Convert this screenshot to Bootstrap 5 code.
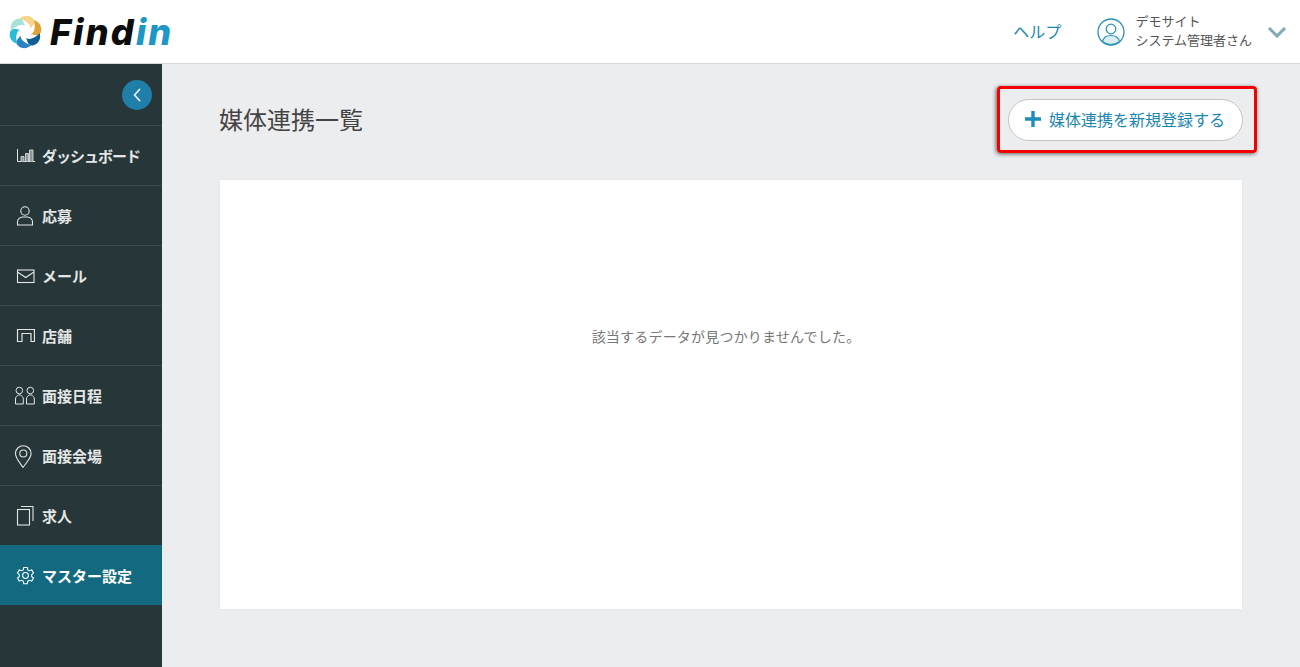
<!DOCTYPE html>
<html lang="ja">
<head>
  <meta charset="UTF-8" />
  <meta name="viewport" content="width=device-width, initial-scale=1.0"/>
  <title>媒体連携一覧 | Findin</title>
  <link href="https://cdn.jsdelivr.net/npm/bootstrap@5.3.0/dist/css/bootstrap.min.css" rel="stylesheet">
  <style>
    html, body { height: 100%; }
    body {
      font-family: "Noto Sans CJK JP", "Liberation Sans", sans-serif;
      background: #ecedef;
      overflow: hidden;
    }
    .top-bar {
      height: 64px;
      background: #fff;
      border-bottom: 1px solid #d9d9d9;
      padding: 0 13px 0 9px;
    }
    .logo-word {
      font-family: Inter, "Liberation Sans", sans-serif;
      font-weight: 800;
      font-style: italic;
      font-size: 36px;
      line-height: 1;
      letter-spacing: 2.2px;
      color: #0c0c0c;
      margin-left: 8px;
    }
    .logo-word span { color: #1c97c6; }
    .help-link { color: #1a87b2; font-size: 16px; text-decoration: none; margin: 0 36px 2px 0; }
    .user-name { color: #555; font-size: 13px; line-height: 19px; margin: 0 15px 3px 10px; }
    .side-bar { width: 162px; background: #263639; flex: none; }
    .toggle-row { height: 61px; padding-right: 10px; }
    .toggle-btn {
      width: 30px; height: 30px; padding: 0; border: 0;
      border-radius: 50%; background: #1f7fa8;
    }
    .menu-row {
      height: 60px;
      border-top: 1px solid #3f4b4b;
      padding: 2px 0 0 15px;
      color: #e4e6e6;
      font-size: 15px;
      font-weight: 700;
      text-decoration: none;
    }
    .menu-row:hover { color: #fff; }
    .menu-row.is-active { background: #136a80; color: #fff; border-top-color: #136a80; }
    .menu-tight { letter-spacing: -1px; }
    .menu-icon { width: 20px; height: 24px; margin: 0 7px 2px 0; flex: none; }
    .page-main { padding: 22px 58px 0 58px; }
    .page-head { height: 94px; padding-bottom: 27px; }
    .page-title { font-size: 24px; font-weight: 400; color: #444; margin: 0 0 0 -1px; }
    .mark-box {
      padding: 10px 11px 9px 8px;
      margin: 0 -15px 0 0;
      border: 3px solid #f40000;
      border-radius: 4px;
      box-shadow: -1px 1px 4px rgba(0,0,0,.6);
    }
    .add-btn {
      height: 42px;
      width: 235px;
      border: 1px solid #c4c6c8;
      border-radius: 21px;
      background: #fff;
      color: #1a87b2;
      font-size: 16px;
      padding: 0 1px 2px 0;
    }
    .add-btn:hover { background: #fff; color: #1a87b2; border-color: #c4c6c8; }
    .empty-card {
      height: 429px;
      border: 0;
      border-radius: 0;
      box-shadow: 0 0 2px rgba(0,0,0,.06);
      color: #777;
      font-size: 14px;
      letter-spacing: .2px;
      padding: 0 10px 117px 0;
    }
  </style>
</head>
<body>
  <header class="top-bar d-flex align-items-center">
    <svg width="33" height="34" viewBox="-16.500 -17 33 34">
      <path d="M-6 -13C-2 -17 4 -17.500 8 -13C9.500 -11 9 -9 8.500 -8C7 -6 6 -5 5 -3.500C5 -7 2 -11 -6 -13Z" fill="#f6d58a"/>
      <path d="M-6 -13C-2 -17 4 -17.500 8 -13C9.500 -11 9 -9 8.500 -8C7 -6 6 -5 5 -3.500C5 -7 2 -11 -6 -13Z" fill="#e2a035" transform="rotate(60)"/>
      <path d="M-6 -13C-2 -17 4 -17.500 8 -13C9.500 -11 9 -9 8.500 -8C7 -6 6 -5 5 -3.500C5 -7 2 -11 -6 -13Z" fill="#0f5f93" transform="rotate(120)"/>
      <path d="M-6 -13C-2 -17 4 -17.500 8 -13C9.500 -11 9 -9 8.500 -8C7 -6 6 -5 5 -3.500C5 -7 2 -11 -6 -13Z" fill="#2c82c4" transform="rotate(180)"/>
      <path d="M-6 -13C-2 -17 4 -17.500 8 -13C9.500 -11 9 -9 8.500 -8C7 -6 6 -5 5 -3.500C5 -7 2 -11 -6 -13Z" fill="#28bcd6" transform="rotate(240)"/>
      <path d="M-6 -13C-2 -17 4 -17.500 8 -13C9.500 -11 9 -9 8.500 -8C7 -6 6 -5 5 -3.500C5 -7 2 -11 -6 -13Z" fill="#a6e3da" transform="rotate(300)"/>
    </svg>
    <div class="logo-word">Find<span>in</span></div>
    <a class="help-link ms-auto" href="#">ヘルプ</a>
    <svg width="28" height="28" viewBox="0 0 28 28">
      <circle cx="14" cy="14" r="13" fill="#fff" stroke="#2a93b8" stroke-width="1.300"/>
      <path d="M5.500 23.500c1-4.500 4.500-6 8.500-6s7.500 1.500 8.500 6a13 13 0 0 1-17 0Z" fill="#dcecf2" stroke="#2a93b8" stroke-width="1.100"/>
      <circle cx="14" cy="11" r="4.800" fill="#fff" stroke="#2a93b8" stroke-width="1.300"/>
    </svg>
    <div class="user-name">デモサイト<br>システム管理者さん</div>
    <svg width="20" height="12" viewBox="0 0 20 12">
      <path d="M2 2l8 8 8-8" fill="none" stroke="#7fa9b8" stroke-width="3"/>
    </svg>
  </header>

  <div class="d-flex" style="height:603px">
    <nav class="side-bar d-flex flex-column">
      <div class="toggle-row d-flex align-items-center justify-content-end">
        <button class="toggle-btn d-flex align-items-center justify-content-center" type="button" aria-label="閉じる">
          <svg width="10" height="14" viewBox="0 0 10 14"><path d="M7.500 1.500 2.500 7l5 5.500" fill="none" stroke="#e8eef0" stroke-width="1.800" stroke-linecap="round" stroke-linejoin="round"/></svg>
        </button>
      </div>
      <a class="menu-row menu-tight d-flex align-items-center" href="#">
        <svg class="menu-icon" viewBox="0 0 20 24" fill="none" stroke="#e4e6e6" stroke-width="1"><path d="M2.500 5v12.500H20"/><path d="M6 17.500v-5h3v5M10.500 17.500v-8h3v8M14.500 17.500V6h3.500v11.500" fill="#8d9799" stroke-width=".8"/></svg>ダッシュボード
      </a>
      <a class="menu-row d-flex align-items-center" href="#">
        <svg class="menu-icon" viewBox="0 0 20 24" fill="none" stroke="#e4e6e6" stroke-width="1.100"><circle cx="10" cy="7" r="4.200"/><path d="M2.500 21v-3c0-2.500 2.500-4.500 5-5h5c2.500.5 5 2.500 5 5v3Z"/></svg>応募
      </a>
      <a class="menu-row d-flex align-items-center" href="#">
        <svg class="menu-icon" viewBox="0 0 20 24" fill="none" stroke="#e4e6e6" stroke-width="1.100"><rect x="2.500" y="6" width="16.500" height="12.500"/><path d="M2.500 8l8.200 5.500L19 8"/></svg>メール
      </a>
      <a class="menu-row d-flex align-items-center" href="#">
        <svg class="menu-icon" viewBox="0 0 20 24" fill="none" stroke="#e4e6e6" stroke-width="1.200"><path d="M2.500 17.500V5.500h17v12H16v-8H7v8Z"/></svg>店舗
      </a>
      <a class="menu-row d-flex align-items-center" href="#">
        <svg class="menu-icon" viewBox="0 0 20 24" fill="none" stroke="#e4e6e6" stroke-width="1"><circle cx="4.300" cy="6.500" r="3.300"/><path d="M.5 20v-5c0-2 1.500-3.500 3-4h1.800c1.500.5 3 2 3 4v5Z"/><circle cx="15.300" cy="6.500" r="3.300"/><path d="M11.500 20v-5c0-2 1.500-3.500 3-4h1.800c1.500.5 3 2 3 4v5Z"/></svg>面接日程
      </a>
      <a class="menu-row d-flex align-items-center" href="#">
        <svg class="menu-icon" viewBox="0 0 20 24" fill="none" stroke="#e4e6e6" stroke-width="1.100"><path d="M8 23.500C4 17.500.5 14 .5 9.500a7.800 7.800 0 0 1 15.600 0c0 4.500-4 8-8.100 14Z"/><circle cx="8.300" cy="9.500" r="3.500"/></svg>面接会場
      </a>
      <a class="menu-row d-flex align-items-center" href="#">
        <svg class="menu-icon" viewBox="0 0 20 24" fill="none" stroke="#e4e6e6" stroke-width="1.100"><rect x="2.500" y="5.500" width="12" height="15.500"/><path d="M6 2.500h12V17"/></svg>求人
      </a>
      <a class="menu-row is-active d-flex align-items-center" href="#">
        <svg class="menu-icon" viewBox="0 0 20 24" fill="none" stroke="#fff" stroke-width="1.200"><g transform="translate(10.500 11.500) scale(.88) translate(-10 -12.700)"><path d="M8 3.500h4l.6 2.800 1.800 1 2.700-.9 2 3.400-2.100 1.900v2.100l2.100 1.900-2 3.400-2.700-.9-1.800 1-.6 2.800H8l-.6-2.800-1.800-1-2.700.9-2-3.400L3 13.800v-2.100L.9 9.800l2-3.400 2.700.9 1.800-1Z"/><circle cx="10" cy="12.700" r="3.300"/></g></svg>マスター設定
      </a>
    </nav>

    <main class="page-main flex-grow-1">
      <div class="page-head d-flex align-items-center justify-content-between">
        <h1 class="page-title">媒体連携一覧</h1>
        <div class="mark-box">
          <button class="btn add-btn d-flex align-items-center justify-content-center gap-2" type="button">
            <svg width="16" height="16" viewBox="0 0 16 16"><path d="M8 0v16M0 8h16" stroke="#1d8dba" stroke-width="3.400"/></svg>
            媒体連携を新規登録する
          </button>
        </div>
      </div>
      <div class="card empty-card d-flex align-items-center justify-content-center">該当するデータが見つかりませんでした。</div>
    </main>
  </div>
</body>
</html>
